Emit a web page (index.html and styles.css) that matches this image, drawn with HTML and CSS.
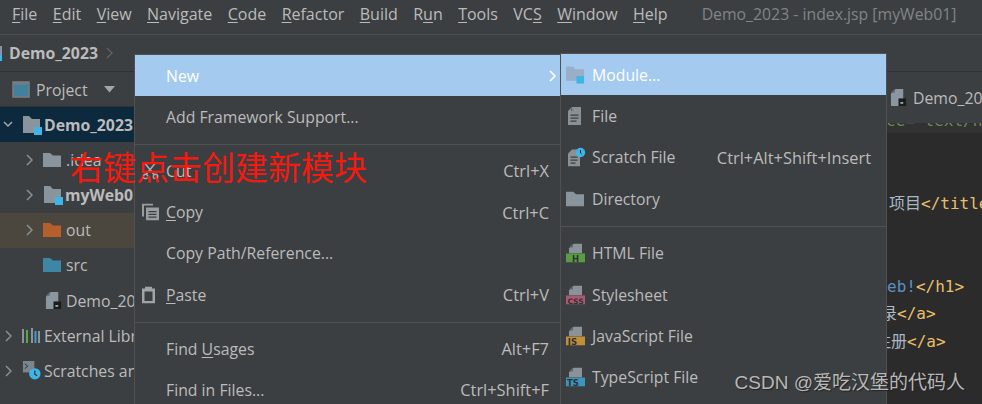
FILE: index.html
```html
<!DOCTYPE html>
<html lang="zh">
<head>
<meta charset="utf-8">
<title>Demo_2023</title>
<link rel="stylesheet" href="styles.css">
</head>
<body>
<svg class="defs" width="0" height="0" aria-hidden="true">
  <defs>
    <symbol id="folder" viewBox="0 0 18 14"><path d="M0 0h7l3 2.500h8V14H0z"/></symbol>
    <symbol id="badge" viewBox="0 0 20 20"><path fill="#8a949c" d="M1 1h6l3 3h8v9h-4v5H1z"/><rect x="12" y="12" width="8" height="8" fill="#3db5e6"/></symbol>
    <symbol id="jsp" viewBox="0 0 18 20"><path fill="#8b969e" d="M6 1h8v18H1V6z"/><path fill="#5f6a72" d="M1 5l4-4v4z"/><rect x="9" y="11" width="8" height="8" fill="#1b1c1e"/><rect x="11" y="15" width="3" height="1.500" fill="#ccc"/></symbol>
    <symbol id="page" viewBox="0 0 19 10"><path fill="#8b9298" d="M8 0h8v10H3V5z"/><path fill="#62696e" d="M3 4l4-4v4z"/></symbol>
  </defs>
</svg>
<div class="app">
  <header class="menubar">
    <nav class="menus">
      <span><u>F</u>ile</span><span><u>E</u>dit</span><span><u>V</u>iew</span><span><u>N</u>avigate</span><span><u>C</u>ode</span><span><u>R</u>efactor</span><span><u>B</u>uild</span><span>R<u>u</u>n</span><span><u>T</u>ools</span><span>VC<u>S</u></span><span><u>W</u>indow</span><span><u>H</u>elp</span>
    </nav>
    <span class="wintitle">Demo_2023 - index.jsp [myWeb01]</span>
  </header>
  <div class="navbar">
    <svg class="navicon" width="2" height="15" viewBox="0 0 2 15"><path fill="#8a949c" d="M0 0h2v9H0z"/><rect y="9" width="2" height="6" fill="#3db5e6"/></svg>
    <b class="crumb">Demo_2023</b>
    <svg class="chev" width="7" height="12" viewBox="0 0 7 12"><path d="M1 1l5 5-5 5" fill="none" stroke="#5f6366" stroke-width="1.400"/></svg>
  </div>
  <div class="main">
    <aside class="side">
      <div class="sidehead">
        <svg class="projicon" width="18" height="17" viewBox="0 0 18 17"><rect x="1" y="1" width="16" height="15" fill="#41819f" stroke="#787c7f" stroke-width="1.600"/><rect x="1" y="1" width="16" height="2.500" fill="#787c7f"/></svg>
        <span class="sidetitle">Project</span>
        <svg class="drop" width="11" height="7" viewBox="0 0 11 7"><path d="M0 0h11L5.500 6.500z" fill="#a3a6a8"/></svg>
      </div>
      <ul class="tree">
        <li class="row sel lv0">
          <svg class="arr" width="10" height="7" viewBox="0 0 10 7"><path d="M1 1l4 4 4-4" fill="none" stroke="#a4a6a8" stroke-width="1.500"/></svg>
          <svg class="ic" width="20" height="20"><use href="#badge"/></svg><b>Demo_2023</b>
        </li>
        <li class="row lv1">
          <svg class="arr r" width="7" height="12" viewBox="0 0 7 12"><path d="M1 1l5 5-5 5" fill="none" stroke="#8c8f91" stroke-width="1.500"/></svg>
          <svg class="fold grey" width="18" height="14"><use href="#folder"/></svg><span>.idea</span>
        </li>
        <li class="row lv1">
          <svg class="arr r" width="7" height="12" viewBox="0 0 7 12"><path d="M1 1l5 5-5 5" fill="none" stroke="#8c8f91" stroke-width="1.500"/></svg>
          <svg class="ic2" width="20" height="20"><use href="#badge"/></svg><b>myWeb01</b>
        </li>
        <li class="row lv1 out">
          <svg class="arr r" width="7" height="12" viewBox="0 0 7 12"><path d="M1 1l5 5-5 5" fill="none" stroke="#8c8f91" stroke-width="1.500"/></svg>
          <svg class="fold orange" width="18" height="14"><use href="#folder"/></svg><span>out</span>
        </li>
        <li class="row lv2">
          <svg class="fold blue" width="18" height="14"><use href="#folder"/></svg><span>src</span>
        </li>
        <li class="row lv2">
          <svg class="ic3" width="17" height="19"><use href="#jsp"/></svg><span>Demo_2023.iml</span>
        </li>
        <li class="row lv0">
          <svg class="arr r0" width="7" height="12" viewBox="0 0 7 12"><path d="M1 1l5 5-5 5" fill="none" stroke="#8c8f91" stroke-width="1.500"/></svg>
          <svg class="ic lib" width="18" height="15" viewBox="0 0 18 15"><path fill="#8a949c" d="M0 1h2v14H0zM9 0h2v15H9zM16 3h2v12h-2z"/><path fill="#59a845" d="M4 2h2v13H4z"/><path fill="#3e9ecf" d="M12.500 3h2v12h-2z"/></svg><span>External Libraries</span>
        </li>
        <li class="row lv0">
          <svg class="arr r0" width="7" height="12" viewBox="0 0 7 12"><path d="M1 1l5 5-5 5" fill="none" stroke="#8c8f91" stroke-width="1.500"/></svg>
          <svg class="ic scr" width="19" height="19" viewBox="0 0 20 20"><path fill="#7b858c" d="M1 0h12v12H1z"/><path d="M3 3l3 2.500L3 8" fill="none" stroke="#2b2d2f" stroke-width="1"/><circle cx="13.500" cy="13.500" r="6" fill="#3db5e6"/><path d="M13.500 10v4l2.500 1.500" fill="none" stroke="#2b2d2f" stroke-width="1.200"/></svg><span>Scratches and Consoles</span>
        </li>
      </ul>
    </aside>
    <section class="editor">
      <div class="tabs">
        <svg class="tabicon" width="17" height="19"><use href="#jsp"/></svg><span>Demo_2023</span>
      </div>
      <div class="code">
        <div class="strip"><span class="str">ce="text/html</span></div>
        <div class="line"></div>
        <div class="line"></div>
        <div class="line l-title"><span class="zh">项目</span><span class="tag">&lt;/title&gt;</span></div>
        <div class="line"></div>
        <div class="line"></div>
        <div class="line l-h1"><span class="kw">eb!</span><span class="tag">&lt;/h1&gt;</span></div>
        <div class="line l-login"><span class="zh">录</span><span class="tag">&lt;/a&gt;</span></div>
        <div class="line l-reg"><span class="zh">注册</span><span class="tag">&lt;/a&gt;</span></div>
      </div>
    </section>
  </div>
</div>

<div class="menu first">
  <div class="item hot"><span class="lab">New</span><svg class="more" width="8" height="12" viewBox="0 0 8 12"><path d="M1 1l5 5-5 5" fill="none" stroke="#fff" stroke-width="1.600"/></svg></div>
  <div class="item"><span class="lab">Add Framework Support...</span></div>
  <hr class="sep">
  <div class="item"><svg class="mi" width="17" height="17" viewBox="0 0 17 17"><path d="M3 1l9 11M13 1L4 12" stroke="#a8abad" stroke-width="1.600" fill="none"/><circle cx="3.500" cy="14" r="2.200" fill="none" stroke="#a8abad" stroke-width="1.400"/><circle cx="13.500" cy="14" r="2.200" fill="none" stroke="#a8abad" stroke-width="1.400"/></svg><span class="lab">C<u>u</u>t</span><span class="key">Ctrl+X</span></div>
  <div class="item"><svg class="mi" width="17" height="17" viewBox="0 0 17 17"><path fill="#9a9da0" d="M0 0h11v2H2v11H0z"/><path fill="#9a9da0" d="M4 4h13v13H4z"/><path fill="#3c3f41" d="M6.500 7.500h8v1.300h-8zM6.500 10.300h8v1.300h-8zM6.500 13h8v1.300h-8z"/></svg><span class="lab"><u>C</u>opy</span><span class="key">Ctrl+C</span></div>
  <div class="item"><span class="lab">Copy Path/Reference...</span></div>
  <div class="item"><svg class="mi paste" width="13" height="17" viewBox="0 0 13 17"><path fill="#a1a4a6" d="M0 2h3V0h7v2h3v15H0z"/><path fill="#3c3f41" d="M2.500 5h8v9.500h-8z"/></svg><span class="lab"><u>P</u>aste</span><span class="key">Ctrl+V</span></div>
  <hr class="sep">
  <div class="item"><span class="lab">Find <u>U</u>sages</span><span class="key">Alt+F7</span></div>
  <div class="item"><span class="lab">Find in Files...</span><span class="key">Ctrl+Shift+F</span></div>
</div>

<div class="menu second">
  <div class="item hot"><svg class="mi wide" width="19" height="19" viewBox="0 0 20 20"><path fill="#9aaec8" d="M0 1h7l3 3h9v12H0z"/><rect x="11" y="11" width="8" height="8" fill="#3db5e6"/></svg><span class="lab">Module...</span></div>
  <div class="item"><svg class="mi doc" width="13" height="18" viewBox="0 0 13 18"><path fill="#8a9196" d="M4 0h9v18H0V4z"/><path fill="#3c3f41" d="M3 3.800h1.200V.2zM2.500 7.500h8v1.300h-8zM2.500 10.500h8v1.300h-8zM2.500 13.500h6v1.300h-6z"/></svg><span class="lab">File</span></div>
  <div class="item"><svg class="mi" width="18" height="19" viewBox="0 0 18 19"><path fill="#8a9196" d="M4 2h8v17H0V6z"/><path fill="#3c3f41" d="M2.500 9h7v1.200h-7zM2.500 12h7v1.200h-7zM2.500 15h5v1.200h-5z"/><circle cx="12.500" cy="5" r="4.700" fill="#3db5e6"/><path d="M12.500 2.500v3l1.200 1" fill="none" stroke="#2b2d2f"/></svg><span class="lab">Scratch File</span><span class="key">Ctrl+Alt+Shift+Insert</span></div>
  <div class="item"><svg class="mi wide fold grey" width="18" height="15" viewBox="0 0 18 14" preserveAspectRatio="none"><path d="M0 0h7l3 2.500h8V14H0z"/></svg><span class="lab">Directory</span></div>
  <hr class="sep">
  <div class="item"><svg class="mi wide" width="19" height="19" viewBox="0 0 19 19"><use href="#page" width="19" height="10"/><rect y="10" width="19" height="9" fill="#5a9c42"/><text x="9.500" y="18" class="ft">H</text></svg><span class="lab">HTML File</span></div>
  <div class="item"><svg class="mi wide" width="19" height="19" viewBox="0 0 19 19"><use href="#page" width="19" height="10"/><rect y="10" width="19" height="9" fill="#a95a72"/><text x="9.500" y="18" class="ft ft-css">CSS</text></svg><span class="lab">Stylesheet</span></div>
  <div class="item"><svg class="mi wide" width="19" height="19" viewBox="0 0 19 19"><use href="#page" width="19" height="10"/><rect y="10" width="19" height="9" fill="#c18f38"/><text x="6.500" y="18" class="ft">JS</text></svg><span class="lab">JavaScript File</span></div>
  <div class="item"><svg class="mi wide" width="19" height="19" viewBox="0 0 19 19"><use href="#page" width="19" height="10"/><rect y="10" width="19" height="9" fill="#3c95bd"/><text x="7" y="18" class="ft">TS</text></svg><span class="lab">TypeScript File</span></div>
</div>

<div class="note">右键点击创建新模块</div>
<div class="mark">CSDN @爱吃汉堡的代码人</div>
</body>
</html>
```
FILE: styles.css
```css
* { box-sizing: border-box; }
html, body { margin: 0; height: 100%; overflow: hidden; }
body {
  position: relative;
  width: 982px;
  height: 404px;
  background: #3c3f41;
  color: #bbbbbb;
  font-family: "Open Sans", "Noto Sans CJK SC", sans-serif;
  font-size: 15.800px;
}
.defs { position: absolute; }
u { text-underline-offset: 2px; text-decoration-thickness: 1px; }
.app { display: flex; flex-direction: column; height: 404px; }
.menubar {
  flex: 0 0 35px;
  display: flex;
  align-items: center;
  padding: 0 0 6px 12px;
  border-bottom: 1px solid #4b4d4f;
  white-space: nowrap;
}
.menus { display: flex; gap: 15.450px; font-size: 16px; }
.wintitle { margin-left: 34px; color: #808487; }
.navbar {
  flex: 0 0 37px;
  display: flex;
  align-items: center;
  border-bottom: 1px solid #323232;
}
.navicon { margin-right: 7px; }
.chev { margin-left: 8px; }
.main { flex: 1; display: flex; min-height: 0; }
.side { flex: 0 0 134px; overflow: hidden; }
.sidehead {
  height: 35px;
  display: flex;
  align-items: center;
  padding: 1px 0 0 12px;
  border-bottom: 1px solid #323232;
}
.sidetitle { margin-left: 6px; }
.drop { margin-left: 16px; }
.tree { list-style: none; margin: 0; padding: 0; width: 300px; }
.row { height: 35.200px; display: flex; align-items: center; white-space: nowrap; }
.row.sel { background: #0d293e; width: 134px; }
.row.out { background: #4b473e; width: 134px; }
.lv0 { padding-left: 3px; }
.lv1 { padding-left: 26px; }
.lv2 { padding-left: 43px; }
.arr { flex: none; }
.arr.r { margin-right: 10px; }
.arr.r0 { margin-left: 2px; margin-right: 10px; }
.sel .arr { margin-right: 9px; }
.ic { margin-right: 2px; flex: none; }
.lib { margin-right: 4px; }
.scr { margin-right: 3px; }
.ic2 { margin-right: 2px; flex: none; }
.ic3 { margin-right: 4px; margin-left: 2px; flex: none; }
.fold { flex: none; margin-right: 5px; }
.grey { fill: #8a949c; }
.orange { fill: #b5602c; }
.blue { fill: #3d86a6; }
.editor { flex: 1; display: flex; flex-direction: column; min-width: 0; margin-left: 753px; }
.tabs { flex: 0 0 51px; display: flex; align-items: center; gap: 6px; padding-left: 3px; white-space: nowrap; overflow: hidden; }
.tabicon { flex: none; }
.code {
  flex: 1;
  background: #2b2b2b;
  font-family: "DejaVu Sans Mono", "Noto Sans CJK SC", monospace;
  font-size: 16px;
  line-height: 27.600px;
  color: #a9b7c6;
  overflow: hidden;
  white-space: nowrap;
}
.strip { height: 10px; line-height: 10px; overflow: hidden; background: #323232; margin-left: -1px; }
.str { color: #6a8759; position: relative; top: -7px; }
.line { height: 27.600px; }
.code .line:nth-child(2) { margin-top: 1.600px; }
.l-title { margin-left: 2px; }
.l-login { margin-left: -6px; }
.l-reg { margin-left: -12px; }
.zh { color: #a9b7c6; }
.tag { color: #e8bf6a; }
.kw { color: #5c8fc7; }
.menu {
  position: absolute;
  height: 352px;
  background: #3c3f41;
  border: 1px solid #515151;
  display: flex;
  flex-direction: column;
}
.first { left: 134px; top: 54px; width: 427px; }
.second { left: 560px; top: 53px; width: 327px; }
.item {
  flex: none;
  height: 41.200px;
  display: flex;
  align-items: center;
  padding: 0 11px 0 31px;
  position: relative;
  white-space: nowrap;
}
.second .item { height: 41.400px; padding-right: 15px; }
.hot { background: #a5caf0; color: #ffffff; }
.first .hot { padding-right: 3px; }
.lab { flex: none; }
.key { margin-left: auto; font-size: 16.400px; }
.more { margin-left: auto; }
.mi { position: absolute; left: 7px; top: 50%; transform: translateY(-50%); margin: 0; }
.mi.wide { left: 5px; }
.mi.doc { left: 7px; }
.sep { flex: none; height: 1px; border: 0; background: #515151; margin: 6.500px 0 5.500px; }
.second .sep { margin: 6px 0; }
.ft { font-family: "DejaVu Sans", sans-serif; font-size: 8.500px; font-weight: 700; fill: #2f3133; text-anchor: middle; }
.ft-css { font-size: 7.500px; }
.note {
  position: absolute;
  left: 70px;
  top: 142px;
  font-size: 33px;
  line-height: 48px;
  color: #f5190f;
  font-family: "Noto Sans CJK SC", sans-serif;
  white-space: nowrap;
}
.mark {
  position: absolute;
  right: 17px;
  top: 371px;
  font-family: "Liberation Sans", "Noto Sans CJK SC", sans-serif;
  font-size: 19px;
  line-height: 24px;
  color: #b8b8b8;
  white-space: nowrap;
  text-shadow: 1px 1px 1px #222;
}
```
